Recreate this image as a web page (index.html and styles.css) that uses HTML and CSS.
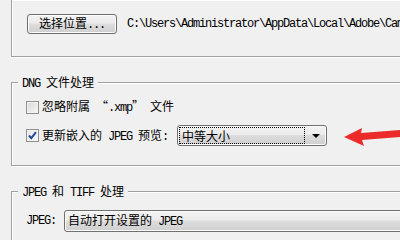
FILE: index.html
```html
<!DOCTYPE html>
<html lang="zh-CN">

<head>
  <meta charset="UTF-8">
  <title>Camera Raw 首选项</title>
  <link rel="stylesheet" href="styles.css">
</head>

<body>
  <div class="dialog">
    <div class="group group-first">
      <div class="row">
        <button class="btn">选择位置<span class="en">...</span></button>
        <span class="en path">C:\Users\Administrator\AppData\Local\Adobe\CameraRaw\Cache\</span>
      </div>
    </div>

    <div class="group group-dng">
      <span class="legend"><span class="en">DNG </span>文件处理</span>
      <div class="check-row">
        <span class="checkbox"></span>
        <span>忽略附属<span class="en"> </span>“<span class="en">.xmp</span>”<span class="en"> </span>文件</span>
      </div>
      <div class="check-row row-tall">
        <span class="checkbox checked">
          <svg width="11" height="11" viewBox="0 0 11 11"><path d="M2 5.5 L4.3 8.2 L9 2.2" fill="none" stroke="#1f4c98" stroke-width="2"/></svg>
        </span>
        <span>更新嵌入的<span class="en"> JPEG </span>预览<span class="en">:</span></span>
        <div class="select select-small">
          <span class="focus">中等大小</span>
          <span class="caret"></span>
        </div>
      </div>
    </div>

    <div class="group group-jpeg">
      <span class="legend"><span class="en">JPEG </span>和<span class="en"> TIFF </span>处理</span>
      <div class="row">
        <span class="en">JPEG:</span>
        <div class="select select-wide">
          <span class="value">自动打开设置的<span class="en"> JPEG</span></span>
          <span class="caret"></span>
        </div>
      </div>
    </div>
  </div>

  <!-- red annotation arrow -->
  <svg class="arrow" width="400" height="240" viewBox="0 0 400 240">
    <path d="M344 137 L362 128 L361 133 L400 130 L400 137 L362 140 L364 146 Z" fill="#ec2b2b"/>
  </svg>
</body>

</html>
```

FILE: styles.css
```css
* {
  box-sizing: border-box;
}

body {
  margin: 0;
  width: 400px;
  height: 240px;
  overflow: hidden;
  position: relative;
  background-color: #f0f0f0;
  color: #000;
  font-family: "Noto Sans CJK SC", sans-serif;
  font-size: 12px;
  line-height: 14px;
}

.en {
  font-family: "Liberation Mono", monospace;
  font-size: 12px;
  letter-spacing: -1.2px;
  white-space: pre;
}

.dialog {
  width: 700px;
  padding-left: 11px;
}

.group {
  position: relative;
  border: 1px solid #a0a0a0;
  box-shadow: inset 1px 1px 0 #fff, 1px 1px 0 #fff;
}

.group-first {
  border-top: 0;
  padding: 14px 0 22px 15px;
}

.group-dng {
  margin-top: 25px;
  padding: 14px 0 19px 14px;
}

.group-jpeg {
  margin-top: 25px;
  padding: 18px 0 20px 14px;
}

.legend {
  position: absolute;
  top: -8px;
  left: 6px;
  padding: 0 4px;
  background-color: #f0f0f0;
  white-space: nowrap;
}

.row,
.check-row {
  display: flex;
  align-items: center;
  white-space: nowrap;
}

.check-row {
  height: 20px;
  gap: 3px;
}

.row-tall {
  height: 21px;
  margin-top: 8px;
}

/* buttons and dropdowns share the Win7 gradient */
.btn,
.select {
  border: 1px solid #707070;
  border-radius: 3px;
  background: linear-gradient(#f3f3f3 0%, #ebebeb 45%, #dddddd 50%, #cfcfcf 100%);
  box-shadow: inset 0 0 0 1px #fbfbfb;
}

.btn {
  width: 90px;
  height: 20px;
  padding: 0;
  font: inherit;
  color: #000;
}

.path {
  margin-left: 10px;
}

.checkbox {
  width: 13px;
  height: 13px;
  flex: none;
  border: 1px solid #8e8f8f;
  background: linear-gradient(135deg, #d8d8d8, #f8f8f8);
  box-shadow: inset 0 0 0 1px #f3f3f3;
}

.checkbox.checked {
  background: linear-gradient(135deg, #e2e2e2, #ffffff);
}

.checkbox svg {
  display: block;
}

.select {
  display: flex;
  align-items: center;
  padding: 1px;
}

.select-small {
  width: 150px;
  height: 21px;
  margin-left: 6px;
}

.select-wide {
  width: 400px;
  height: 22px;
  margin-left: 8px;
}

.focus {
  flex: 1;
  height: 100%;
  padding-left: 2px;
  border: 1px dotted #000;
  line-height: 15px;
}

.value {
  flex: 1;
  padding-left: 2px;
}

.caret {
  width: 20px;
  height: 100%;
  position: relative;
}

.caret::after {
  content: "";
  position: absolute;
  left: 7px;
  top: 7px;
  border-left: 4px solid transparent;
  border-right: 4px solid transparent;
  border-top: 4px solid #000;
}

.arrow {
  position: absolute;
  left: 0;
  top: 0;
  pointer-events: none;
}
```
